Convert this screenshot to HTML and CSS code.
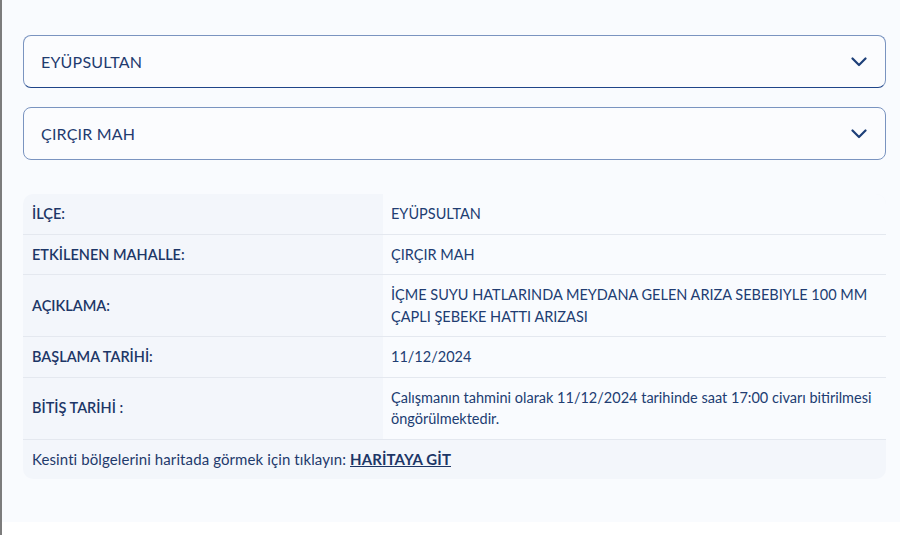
FILE: index.html
```html
<!DOCTYPE html>
<html lang="tr">
<head>
<meta charset="utf-8">
<title>Kesinti Bilgisi</title>
<link rel="stylesheet" href="styles.css">
</head>
<body>
<div class="frame">
  <main class="panel">
    <div class="select select--active">
      <span class="select__value">EYÜPSULTAN</span>
      <svg class="select__chevron" width="16" height="10" viewBox="0 0 16 10" aria-hidden="true"><path d="M1.5 1.5 L8 8 L14.5 1.5" fill="none" stroke="#1d3f78" stroke-width="2.2" stroke-linecap="round" stroke-linejoin="round"/></svg>
    </div>
    <div class="select">
      <span class="select__value">ÇIRÇIR MAH</span>
      <svg class="select__chevron" width="16" height="10" viewBox="0 0 16 10" aria-hidden="true"><path d="M1.5 1.5 L8 8 L14.5 1.5" fill="none" stroke="#1d3f78" stroke-width="2.2" stroke-linecap="round" stroke-linejoin="round"/></svg>
    </div>

    <section class="info">
      <div class="info__row">
        <div class="info__label">İLÇE:</div>
        <div class="info__value">EYÜPSULTAN</div>
      </div>
      <div class="info__row">
        <div class="info__label">ETKİLENEN MAHALLE:</div>
        <div class="info__value">ÇIRÇIR MAH</div>
      </div>
      <div class="info__row">
        <div class="info__label">AÇIKLAMA:</div>
        <div class="info__value">İÇME SUYU HATLARINDA MEYDANA GELEN ARIZA SEBEBIYLE 100 MM ÇAPLI ŞEBEKE HATTI ARIZASI</div>
      </div>
      <div class="info__row">
        <div class="info__label">BAŞLAMA TARİHİ:</div>
        <div class="info__value">11/12/2024</div>
      </div>
      <div class="info__row">
        <div class="info__label">BİTİŞ TARİHİ :</div>
        <div class="info__value">Çalışmanın tahmini olarak 11/12/2024 tarihinde saat 17:00 civarı bitirilmesi öngörülmektedir.</div>
      </div>
      <div class="info__foot">Kesinti bölgelerini haritada görmek için tıklayın: <a class="info__link" href="#">HARİTAYA GİT</a></div>
    </section>
  </main>
</div>
</body>
</html>
```

FILE: styles.css
```css
* { box-sizing: border-box; }

html, body {
  margin: 0;
  background: #ffffff;
}

body {
  font-family: "Lato", "Noto Sans", sans-serif;
  color: #213d72;
}

.frame {
  border-left: 2px solid #7c7c7c;
  height: 535px;
}

.panel {
  background: #f9fbfe;
  height: 522px;
  padding: 35px 14px 0 21px;
  display: flex;
  flex-direction: column;
}

.select {
  height: 53px;
  border: 1.5px solid #7a94c0;
  border-radius: 8px;
  display: flex;
  align-items: center;
  justify-content: space-between;
  padding: 0 18px 0 17px;
  margin-bottom: 19px;
  background: #fbfcfe;
}

.select--active {
  border-bottom-color: #1f4589;
}

.select__value {
  font-size: 16px;
  letter-spacing: 0.2px;
  color: #1f3b6f;
}

.select__chevron { display: block; }

.info {
  margin-top: 15px;
  border-radius: 10px;
  overflow: hidden;
  background: #f3f6fb;
  font-size: 14.5px;
}

.info__row {
  display: grid;
  grid-template-columns: 360px 1fr;
  border-bottom: 1px solid #e4e8ef;
}

.info__label,
.info__value {
  padding: 9px 9px;
  line-height: 21.5px;
  display: flex;
  align-items: center;
}

.info__label {
  font-weight: 600;
  color: #1d3667;
}

.info__value {
  background: #f9fbfe;
  padding-left: 8px;
  padding-right: 10px;
  color: #213d72;
}

.info__foot {
  padding: 9px 9px 9px 9px;
  line-height: 21px;
  font-size: 15px;
  letter-spacing: 0.1px;
  color: #1f3a6c;
}

.info__link {
  font-weight: 700;
  color: #1d3667;
  text-decoration: underline;
}
```
